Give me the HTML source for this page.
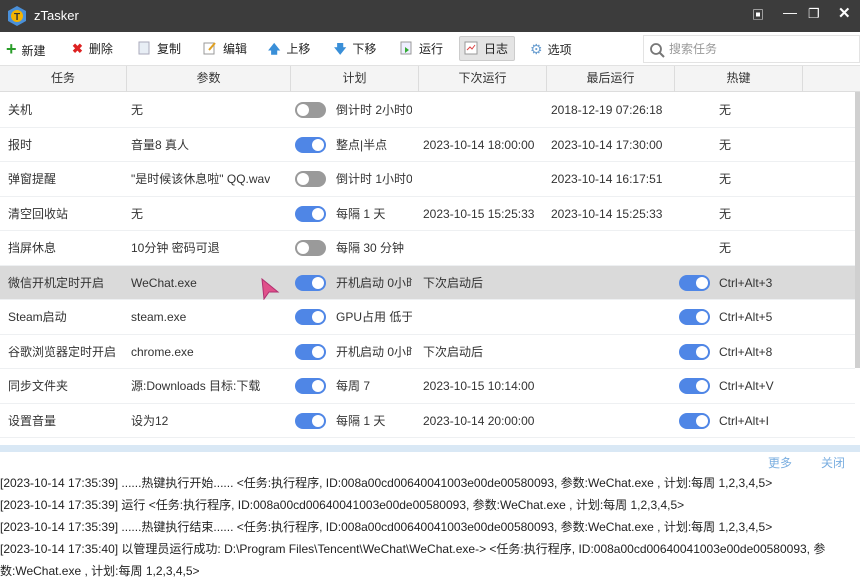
<!DOCTYPE html>
<html><head><meta charset="utf-8"><style>
*{margin:0;padding:0;box-sizing:border-box}
body{width:860px;height:576px;overflow:hidden;background:#fff;font-family:"Liberation Sans","Noto Sans CJK SC",sans-serif;font-size:12px;color:#333;position:relative}
.title{position:absolute;left:0;top:0;width:860px;height:32px;background:#3c3c3c;color:#fff}
.title .t{position:absolute;left:34px;top:8px;font-size:13px}
.tb{position:absolute;top:32px;left:0;width:860px;height:34px;background:#fff;border-bottom:1px solid #e2e2e2}
.btn{position:absolute;top:0;height:34px;line-height:34px;font-size:12px;color:#222;white-space:nowrap}
.ic{display:inline-block;width:14px;height:14px;vertical-align:-2px;margin-right:6px}
.hdr{position:absolute;top:66px;left:0;width:860px;height:26px;background:#f4f4f4;border-bottom:1px solid #ddd}
.hdr div{position:absolute;top:0;height:26px;line-height:24px;text-align:center;border-right:1px solid #dcdcdc;color:#333}
.row{position:absolute;left:0;width:855px;height:34.5px;border-bottom:1px solid #eef0f2;white-space:nowrap}
.row span{position:absolute;top:0;height:34px;line-height:34px;overflow:hidden}
.sel{background:#dadada}
.tg{position:absolute;top:9px;width:31px;height:16px;border-radius:8px}
.tg::after{content:"";position:absolute;top:2px;width:12px;height:12px;border-radius:6px;background:#fff}
.on{background:#4f86e6}.on::after{right:2px}
.off{background:#9a9a9a}.off::after{left:2px}
.log{position:absolute;left:0;height:22px;line-height:22px;font-size:12px;color:#222;white-space:nowrap}
</style></head><body>
<div class="title">
<svg style="position:absolute;left:6px;top:5px" width="22" height="22" viewBox="0 0 22 22"><polygon points="11,1 20,6 20,16 11,21 2,16 2,6" fill="#4a90d9"/><circle cx="11" cy="11" r="6" fill="#f5b400"/><text x="11" y="15" font-size="10" text-anchor="middle" fill="#333" font-weight="bold" font-family="Liberation Sans">T</text></svg>
<span class="t">zTasker</span>
<span style="position:absolute;left:752px;top:6px;font-size:12px">▣</span>
<span style="position:absolute;left:783px;top:4px;font-size:14px">—</span>
<span style="position:absolute;left:808px;top:6px;font-size:13px">❐</span>
<span style="position:absolute;left:838px;top:4px;font-size:15px;font-weight:bold">✕</span>
</div>
<div class="tb">
<div class="btn" style="left:6px"><span style="color:#2a9d2a;font-size:18px;font-weight:bold;margin-right:5px">+</span>新建</div>
<div class="btn" style="left:72px"><span style="color:#d22;font-weight:bold;font-size:13px;margin-right:6px">✖</span>删除</div>
<div class="btn" style="left:137px"><svg class="ic" viewBox="0 0 14 14"><rect x="2" y="1" width="10" height="12" fill="#e8eef5" stroke="#aab"/></svg>复制</div>
<div class="btn" style="left:203px"><svg class="ic" viewBox="0 0 14 14"><rect x="1" y="2" width="10" height="11" fill="#fff" stroke="#999"/><path d="M6 9 L12 2" stroke="#e0a020" stroke-width="2"/></svg>编辑</div>
<div class="btn" style="left:268px"><span style="color:#3a8fd8;font-weight:bold;margin-right:6px">🡅</span>上移</div>
<div class="btn" style="left:334px"><span style="color:#3a8fd8;font-weight:bold;margin-right:6px">🡇</span>下移</div>
<div class="btn" style="left:399px"><svg class="ic" viewBox="0 0 14 14"><rect x="2" y="1" width="10" height="12" fill="#eef" stroke="#999"/><path d="M6 6 L10 9 L6 12Z" fill="#3a3"/></svg>运行</div>
<div style="position:absolute;left:459px;top:4px;width:56px;height:25px;background:#e4e4e4;border:1px solid #ccc;border-radius:2px"></div>
<div class="btn" style="left:464px"><svg class="ic" viewBox="0 0 14 14"><rect x="1" y="1" width="12" height="12" fill="#fff" stroke="#999"/><path d="M3 9 L6 6 L8 8 L11 4" stroke="#d44" fill="none"/></svg>日志</div>
<div class="btn" style="left:530px"><span style="color:#6a9ed0;font-size:14px;margin-right:5px">⚙</span>选项</div>
<div style="position:absolute;left:643px;top:3px;width:217px;height:28px;border:1px solid #e3e3e3;background:#fff"><svg style="position:absolute;left:5px;top:6px" width="16" height="16" viewBox="0 0 16 16"><circle cx="7" cy="7" r="5" fill="none" stroke="#777" stroke-width="1.8"/><path d="M10.5 10.5 L15 15" stroke="#777" stroke-width="2"/></svg><span style="position:absolute;left:25px;top:0;line-height:26px;color:#999">搜索任务</span></div>
</div>
<div class="hdr">
<div style="left:0;width:127px">任务</div>
<div style="left:127px;width:164px">参数</div>
<div style="left:291px;width:128px">计划</div>
<div style="left:419px;width:128px">下次运行</div>
<div style="left:547px;width:128px">最后运行</div>
<div style="left:675px;width:128px">热键</div>
</div>
<div style="position:absolute;left:855px;top:92px;width:5px;height:276px;background:#d0d0d0"></div>

<div class="row" style="top:93px"><span style="left:8px">关机</span><span style="left:131px">无</span><i class="tg off" style="left:295px"></i><span style="left:336px;width:76px">倒计时 2小时0</span><span style="left:551px">2018-12-19 07:26:18</span><span style="left:719px">无</span></div>
<div class="row" style="top:127.5px"><span style="left:8px">报时</span><span style="left:131px">音量8 真人</span><i class="tg on" style="left:295px"></i><span style="left:336px;width:76px">整点|半点</span><span style="left:423px">2023-10-14 18:00:00</span><span style="left:551px">2023-10-14 17:30:00</span><span style="left:719px">无</span></div>
<div class="row" style="top:162px"><span style="left:8px">弹窗提醒</span><span style="left:131px">"是时候该休息啦" QQ.wav</span><i class="tg off" style="left:295px"></i><span style="left:336px;width:76px">倒计时 1小时0</span><span style="left:551px">2023-10-14 16:17:51</span><span style="left:719px">无</span></div>
<div class="row" style="top:196.5px"><span style="left:8px">清空回收站</span><span style="left:131px">无</span><i class="tg on" style="left:295px"></i><span style="left:336px;width:76px">每隔 1 天</span><span style="left:423px">2023-10-15 15:25:33</span><span style="left:551px">2023-10-14 15:25:33</span><span style="left:719px">无</span></div>
<div class="row" style="top:231px"><span style="left:8px">挡屏休息</span><span style="left:131px">10分钟 密码可退</span><i class="tg off" style="left:295px"></i><span style="left:336px;width:76px">每隔 30 分钟</span><span style="left:719px">无</span></div>
<div class="row sel" style="top:265.5px"><span style="left:8px">微信开机定时开启</span><span style="left:131px">WeChat.exe</span><i class="tg on" style="left:295px"></i><span style="left:336px;width:76px">开机启动 0小时</span><span style="left:423px">下次启动后</span><i class="tg on" style="left:679px"></i><span style="left:719px">Ctrl+Alt+3</span>
<svg style="position:absolute;left:260px;top:12px" width="20" height="22" viewBox="0 0 20 22"><path d="M2 1 L18 14 L9 14 L4 21 Z" fill="#e0508a" stroke="#b03070"/></svg></div>
<div class="row" style="top:300px"><span style="left:8px">Steam启动</span><span style="left:131px">steam.exe</span><i class="tg on" style="left:295px"></i><span style="left:336px;width:76px">GPU占用 低于</span><i class="tg on" style="left:679px"></i><span style="left:719px">Ctrl+Alt+5</span></div>
<div class="row" style="top:334.5px"><span style="left:8px">谷歌浏览器定时开启</span><span style="left:131px">chrome.exe</span><i class="tg on" style="left:295px"></i><span style="left:336px;width:76px">开机启动 0小时</span><span style="left:423px">下次启动后</span><i class="tg on" style="left:679px"></i><span style="left:719px">Ctrl+Alt+8</span></div>
<div class="row" style="top:369px"><span style="left:8px">同步文件夹</span><span style="left:131px">源:Downloads 目标:下载</span><i class="tg on" style="left:295px"></i><span style="left:336px;width:76px">每周 7</span><span style="left:423px">2023-10-15 10:14:00</span><i class="tg on" style="left:679px"></i><span style="left:719px">Ctrl+Alt+V</span></div>
<div class="row" style="top:403.5px"><span style="left:8px">设置音量</span><span style="left:131px">设为12</span><i class="tg on" style="left:295px"></i><span style="left:336px;width:76px">每隔 1 天</span><span style="left:423px">2023-10-14 20:00:00</span><i class="tg on" style="left:679px"></i><span style="left:719px">Ctrl+Alt+I</span></div>

<div style="position:absolute;left:0;top:445px;width:860px;height:7px;background:#d9e8f5"></div>
<span style="position:absolute;left:768px;top:454px;color:#7aaee0">更多</span>
<span style="position:absolute;left:821px;top:454px;color:#7aaee0">关闭</span>
<div class="log" style="top:472px">[2023-10-14 17:35:39] ......热键执行开始...... &lt;任务:执行程序, ID:008a00cd00640041003e00de00580093, 参数:WeChat.exe , 计划:每周 1,2,3,4,5&gt;</div>
<div class="log" style="top:494px">[2023-10-14 17:35:39] 运行 &lt;任务:执行程序, ID:008a00cd00640041003e00de00580093, 参数:WeChat.exe , 计划:每周 1,2,3,4,5&gt;</div>
<div class="log" style="top:516px">[2023-10-14 17:35:39] ......热键执行结束...... &lt;任务:执行程序, ID:008a00cd00640041003e00de00580093, 参数:WeChat.exe , 计划:每周 1,2,3,4,5&gt;</div>
<div class="log" style="top:538px">[2023-10-14 17:35:40] 以管理员运行成功: D:\Program Files\Tencent\WeChat\WeChat.exe-&gt; &lt;任务:执行程序, ID:008a00cd00640041003e00de00580093, 参</div>
<div class="log" style="top:560px">数:WeChat.exe , 计划:每周 1,2,3,4,5&gt;</div>
</body></html>
